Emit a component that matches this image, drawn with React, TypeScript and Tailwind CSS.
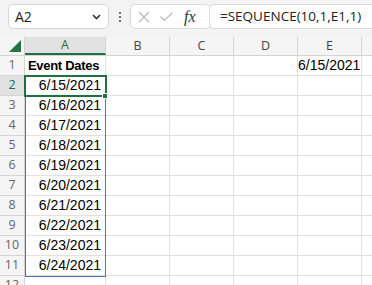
import React from "react";

const cols = ["A", "B", "C", "D", "E", ""];
const colW = ["w-[81px]", "w-[64px]", "w-[64px]", "w-[64px]", "w-[64px]", "w-[40px]"];
const dates = ["6/15/2021","6/16/2021","6/17/2021","6/18/2021","6/19/2021","6/20/2021","6/21/2021","6/22/2021","6/23/2021","6/24/2021"];

export default function App() {
  const rows = Array.from({ length: 12 }, (_, i) => i + 1);
  return (
    <div className="relative w-[372px] h-[285px] overflow-hidden bg-white" style={{ fontFamily: '"Liberation Sans", Arial, sans-serif' }}>
      {/* toolbar */}
      <div className="h-[37px] bg-[#f3f3f3] flex items-start pt-[4px] pl-[8px]">
        <div className="shrink-0 w-[101px] h-[25px] bg-white border border-[#d6d6d6] rounded-[5px] flex items-center justify-between pl-[6px] pr-[7px]">
          <span className="text-[14px] text-[#222]" style={{ fontFamily: '"Open Sans", sans-serif' }}>A2</span>
          <svg width="9" height="6" viewBox="0 0 9 6"><path d="M1 1 L4.5 4.5 L8 1" fill="none" stroke="#333" strokeWidth="1.6" /></svg>
        </div>
        <div className="shrink-0 w-[21px] h-[25px] flex flex-col items-center justify-center gap-[2px]">
          <div className="w-[2px] h-[2px] bg-[#444] rounded-full" />
          <div className="w-[2px] h-[2px] bg-[#444] rounded-full" />
          <div className="w-[2px] h-[2px] bg-[#444] rounded-full" />
        </div>
        <div className="shrink-0 w-[81px] h-[25px] bg-white border border-[#dcdcdc] rounded-[5px] flex items-center pl-[6px]">
          <svg width="14" height="14" viewBox="0 0 14 14"><path d="M2 2 L12 12 M12 2 L2 12" stroke="#b5b5b5" strokeWidth="1.1" fill="none" /></svg>
          <svg className="ml-[8px]" width="15" height="14" viewBox="0 0 15 14"><path d="M1.5 6.5 L5.5 10.5 L13.5 2.5" stroke="#b5b5b5" strokeWidth="1.1" fill="none" /></svg>
          <span className="ml-[10px] text-[16px] italic text-[#333] leading-none" style={{ fontFamily: '"Liberation Serif", serif' }}>fx</span>
        </div>
        <div className="flex-1 -ml-[2px] h-[25px] bg-white border border-[#dcdcdc] border-r-0 rounded-l-[5px] flex items-center pl-[10px] whitespace-nowrap">
          <span className="text-[13.5px] text-[#222]" style={{ fontFamily: '"Open Sans", sans-serif' }}>=SEQUENCE(10,1,E1,1)</span>
        </div>
      </div>

      {/* header row */}
      <div className="flex h-[19px] bg-[#f5f5f5] border-b border-[#d4d4d4] w-max">
        <div className="shrink-0 w-[25px] h-full border-r border-[#d4d4d4] relative">
          <svg className="absolute right-[3px] bottom-[3px]" width="12" height="12" viewBox="0 0 12 12"><path d="M12 0 L12 12 L0 12 Z" fill="#217346" /></svg>
        </div>
        {cols.map((c, i) => (
          <div key={i} className={`shrink-0 ${colW[i]} h-full flex items-center justify-center border-r border-[#d4d4d4] text-[12.5px] ${c === "A" ? "bg-[#e1e1e1] text-[#1e7145] border-b-2 border-b-[#1e7145]" : "text-[#444]"}`} style={{ fontFamily: '"Open Sans", sans-serif' }}>
            {c}
          </div>
        ))}
      </div>

      {/* rows */}
      {rows.map((r) => (
        <div key={r} className="flex h-[20px] w-max">
          <div className={`shrink-0 w-[25px] h-full border-r border-b border-[#d4d4d4] flex items-center justify-center text-[12.5px] ${r === 2 ? "bg-[#e1e1e1] text-[#1e7145]" : "bg-[#f5f5f5] text-[#666]"}`} style={{ fontFamily: '"Open Sans", sans-serif' }}>
            {r}
          </div>
          {cols.map((c, i) => {
            let content: React.ReactNode = null;
            if (c === "A" && r === 1) content = <span className="font-bold pl-[3px] text-[13px] tracking-[-0.3px]">Event Dates</span>;
            else if (c === "A" && r >= 2 && r <= 11) content = <span className="ml-auto pr-[4px]">{dates[r - 2]}</span>;
            else if (c === "E" && r === 1) content = <span className="ml-auto pr-[1px]">6/15/2021</span>;
            return (
              <div key={i} className={`shrink-0 ${colW[i]} h-full border-r border-b border-[#e1e1e1] flex items-center text-[14px] text-black overflow-hidden whitespace-nowrap`}>
                {content}
              </div>
            );
          })}
        </div>
      ))}

      {/* spill range blue border */}
      <div className="absolute left-[25px] top-[76px] w-[81px] h-[201px] border border-[#4472c4] pointer-events-none" />
      {/* active cell */}
      <div className="absolute left-[24px] top-[75px] w-[83px] h-[22px] border-2 border-[#1e7145] pointer-events-none" />
      {/* fill handle */}
      <div className="absolute left-[102px] top-[93px] w-[6px] h-[6px] bg-[#1e7145] border border-white pointer-events-none" />
    </div>
  );
}
